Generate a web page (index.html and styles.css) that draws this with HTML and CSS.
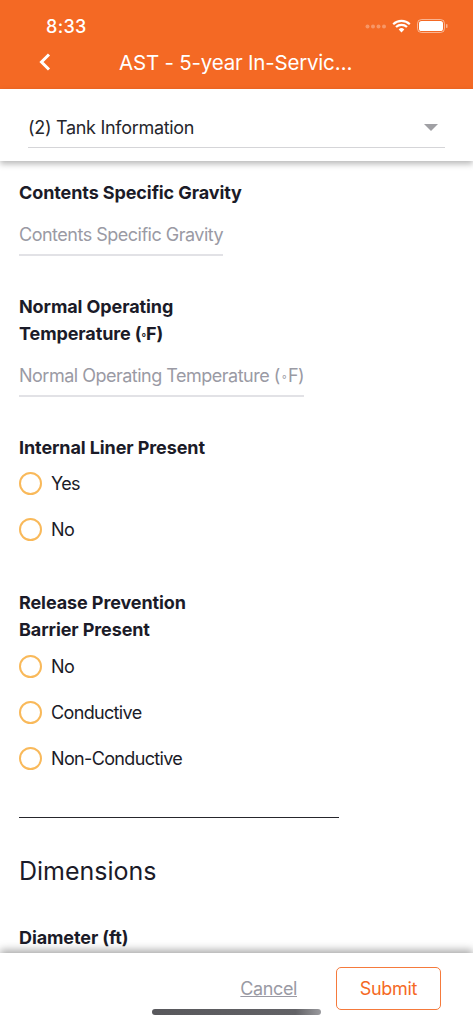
FILE: index.html
```html
<!DOCTYPE html>
<html lang="en">
<head>
<meta charset="utf-8">
<title>AST - 5-year In-Service</title>
<link rel="stylesheet" href="styles.css">
</head>
<body>
<div class="app">
  <header class="header">
    <div class="status">
      <span class="time">8:33</span>
      <div class="status-icons">
        <svg class="signal" width="21" height="5" viewBox="0 0 21 5"><g fill="#fff" opacity=".3"><circle cx="2.5" cy="2.5" r="2"/><circle cx="8" cy="2.5" r="2"/><circle cx="13.5" cy="2.5" r="2"/><circle cx="19" cy="2.5" r="2"/></g></svg>
        <svg class="wifi" width="19" height="14" viewBox="0 0 19 14"><path d="M1.2 5.2a12 12 0 0 1 16.6 0M4 8a8 8 0 0 1 11 0" fill="none" stroke="#fff" stroke-width="2.2"/><path d="M6.7 10.4a4 4 0 0 1 5.6 0L9.5 13.4z" fill="#fff"/></svg>
        <svg class="battery" width="31" height="14" viewBox="0 0 31 14"><rect x=".5" y=".5" width="27" height="13" rx="4" fill="none" stroke="#fff" stroke-opacity=".5"/><rect x="2" y="2" width="24" height="10" rx="2.6" fill="#fff"/><rect x="29" y="5" width="1.5" height="4" rx=".7" fill="#fff" opacity=".5"/></svg>
      </div>
    </div>
    <div class="nav">
      <svg class="back" width="14" height="20" viewBox="0 0 14 20"><path d="M11 2.5 3.5 10l7.5 7.5" fill="none" stroke="#fff" stroke-width="3"/></svg>
      <h1 class="title">AST - 5-year In-Servic…</h1>
    </div>
  </header>

  <section class="picker">
    <div class="select">
      <span>(2) Tank Information</span>
      <span class="caret"></span>
    </div>
  </section>

  <main class="content">
    <div class="field field-first">
      <label class="label">Contents Specific Gravity</label>
      <div class="input">Contents Specific Gravity</div>
    </div>
    <div class="field">
      <label class="label">Normal Operating<br>Temperature (<span class="deg">°</span>F)</label>
      <div class="input">Normal Operating Temperature (<span class="deg deg-wide">°</span>F)</div>
    </div>
    <div class="group">
      <div class="label">Internal Liner Present</div>
      <div class="radios">
        <div class="radio"><span class="dot"></span>Yes</div>
        <div class="radio"><span class="dot"></span>No</div>
      </div>
    </div>
    <div class="group group-2">
      <div class="label">Release Prevention<br>Barrier Present</div>
      <div class="radios">
        <div class="radio"><span class="dot"></span>No</div>
        <div class="radio"><span class="dot"></span>Conductive</div>
        <div class="radio"><span class="dot"></span>Non-Conductive</div>
      </div>
    </div>
    <hr class="divider">
    <h2 class="section-title">Dimensions</h2>
    <div class="label">Diameter (ft)</div>
  </main>

  <footer class="footer">
    <div class="actions">
      <a class="cancel">Cancel</a>
      <button class="submit">Submit</button>
    </div>
    <div class="home"></div>
  </footer>
</div>
</body>
</html>
```
FILE: styles.css
```css
* { box-sizing: border-box; }
html, body { margin: 0; padding: 0; background: #fff; }
body { font-family: Inter, "Liberation Sans", sans-serif; color: #1b1b28; }
.app { width: 473px; height: 1024px; display: flex; flex-direction: column; overflow: hidden; position: relative; }

.header { height: 89px; background: #f46924; color: #fff; flex: none; padding-top: 15px; }
.status { display: flex; justify-content: space-between; align-items: center; padding: 0 25px 0 46px; height: 22px; }
.time { font-size: 18px; font-weight: 500; letter-spacing: .3px; }
.status-icons { display: flex; align-items: center; gap: 6px; }
.nav { display: flex; align-items: center; height: 26px; margin-top: 12px; padding-left: 38px; }
.title { margin: 0; font-size: 20.5px; font-weight: 400; letter-spacing: -.2px; margin-left: 67px; white-space: nowrap; }

.picker { flex: none; height: 72px; background: #fff; padding: 19px 28px 0; box-shadow: 0 3px 6px rgba(0,0,0,.28); position: relative; z-index: 2; }
.select { height: 40px; border-bottom: 1px solid #d5d5d8; display: flex; justify-content: space-between; align-items: flex-start; font-size: 18px; letter-spacing: -.3px; color: #26262c; padding-top: 9px; }
.caret { width: 0; height: 0; border-left: 7px solid transparent; border-right: 7px solid transparent; border-top: 7px solid #a0a0a4; margin: 7px 7px 0 0; }

.content { flex: 1; min-height: 0; overflow: hidden; padding: 18px 19px 0; }
.label { display: block; font-size: 18px; font-weight: 700; letter-spacing: -.1px; line-height: 27px; color: #1b1b28; }
.field { margin-top: 37px; }
.field-first { margin-top: 0; }
.input { display: table; font-size: 18px; letter-spacing: -.5px; line-height: 26px; color: #9a9aa4; padding: 16px 0 6px; border-bottom: 2px solid #e2e2e6; }
.deg { font-size: 10px; line-height: 0; vertical-align: -1px; }
.deg-wide { margin: 0 2px; }
.group { margin-top: 37px; }
.group-2 { margin-top: 48px; }
.radios { display: flex; flex-direction: column; gap: 22px; margin-top: 10px; }
.group-2 .radios { margin-top: 11px; }
.radio { display: flex; align-items: center; gap: 9px; height: 24px; font-size: 18px; letter-spacing: -.65px; color: #1b1b28; }
.dot { width: 23px; height: 23px; border: 2px solid #f9b95a; border-radius: 50%; flex: none; }
.divider { width: 320px; height: 1px; background: #26262c; border: 0; margin: 47px 0 0; }
.section-title { font-size: 25px; font-weight: 400; margin: 38px 0 0; line-height: 30px; color: #1b1b28; }
.content > .label { margin-top: 38px; }

.footer { flex: none; height: 71px; background: #fff; box-shadow: 0 -3px 8px rgba(0,0,0,.34); position: relative; z-index: 2; padding: 14px 32px 0 0; }
.actions { display: flex; justify-content: flex-end; align-items: center; gap: 39px; }
.cancel { font-size: 18px; letter-spacing: -.4px; color: #9a9aa4; text-decoration: underline; }
.submit { width: 105px; height: 43px; background: #fff; border: 1.5px solid #f57a3c; border-radius: 5px; color: #f56924; font: 400 18px Inter, "Liberation Sans", sans-serif; letter-spacing: -.3px; }
.home { position: absolute; left: 152px; bottom: 9px; width: 169px; height: 6px; border-radius: 3px; background: linear-gradient(90deg, #58585c 0%, #626266 85%, #9a9a9e 100%); }
```
